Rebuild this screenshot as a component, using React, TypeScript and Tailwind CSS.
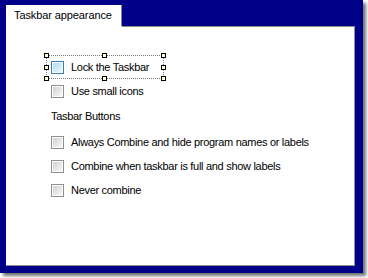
import React from "react";

function Box({ hot = false }: { hot?: boolean }) {
  return hot ? (
    <div className="w-[13px] h-[13px] shrink-0 border border-[#3d7bad] bg-white p-[1px]">
      <div className="w-full h-full bg-gradient-to-br from-[#b2dcf7] to-[#eaf6fd]" />
    </div>
  ) : (
    <div className="w-[13px] h-[13px] shrink-0 border border-[#8e8f8f] bg-white p-[1px]">
      <div className="w-full h-full bg-gradient-to-br from-[#d2d2d2] to-[#f8f8f8]" />
    </div>
  );
}

function Handle({ className }: { className: string }) {
  return <div className={`absolute w-[5px] h-[5px] border border-black bg-[#ffffd8] ${className}`} />;
}

function Row({ label, h = "h-[24px]" }: { label: string; h?: string }) {
  return (
    <div className={`flex items-center gap-[7px] pl-[45px] ${h}`}>
      <Box />
      <span>{label}</span>
    </div>
  );
}

export default function App() {
  return (
    <div
      className="w-[368px] h-[278px] bg-white text-[11px] text-black tracking-[-0.3px]"
      style={{ fontFamily: '"Liberation Sans", Arial, sans-serif' }}
    >
      <div className="flex flex-col w-[363px] h-[273px] bg-[#000088] pl-[6px] pt-[5px] pr-[8px] pb-[7px] shadow-[3px_3px_3px_rgba(0,0,0,0.55)]">
        <div className="flex">
          <div className="w-[116px] h-[21px] bg-white border-r border-[#8a8a8a] pl-[8px] flex items-center tracking-[-0.1px]">
            Taskbar appearance
          </div>
        </div>
        <div className="flex-1 bg-white border-r border-b border-[#8f8f8f] relative">
          <div className="absolute top-0 left-[116px] right-0 h-px bg-[#8a8a8a]" />
          <div className="pt-[29px]">
            <div className="ml-[40px] relative w-[118px] h-[24px] border border-dotted border-[#7a7a7a] flex items-center gap-[7px] pl-[4px]">
              <Box hot />
              <span>Lock the Taskbar</span>
              <Handle className="-left-[3px] -top-[3px]" />
              <Handle className="left-[55px] -top-[3px]" />
              <Handle className="-right-[3px] -top-[3px]" />
              <Handle className="-left-[3px] top-[8.5px]" />
              <Handle className="-right-[3px] top-[8.5px]" />
              <Handle className="-left-[3px] -bottom-[3px]" />
              <Handle className="left-[55px] -bottom-[3px]" />
              <Handle className="-right-[3px] -bottom-[3px]" />
            </div>
            <Row label="Use small icons" />
            <div className="h-[27px] flex items-center pl-[45px]">Tasbar Buttons</div>
            <Row label="Always Combine and hide program names or labels" />
            <Row label="Combine when taskbar is full and show labels" />
            <Row label="Never combine" />
          </div>
        </div>
      </div>
    </div>
  );
}
